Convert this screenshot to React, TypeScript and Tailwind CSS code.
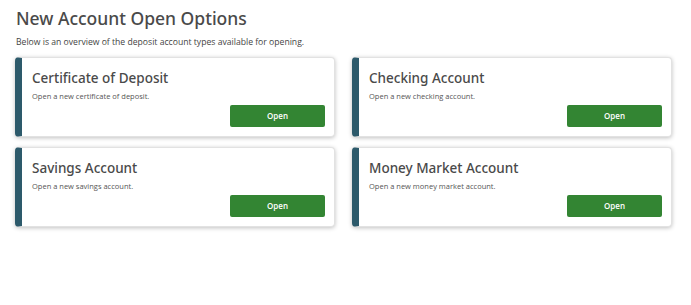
const accounts = [
  { title: "Certificate of Deposit", desc: "Open a new certificate of deposit." },
  { title: "Checking Account", desc: "Open a new checking account." },
  { title: "Savings Account", desc: "Open a new savings account." },
  { title: "Money Market Account", desc: "Open a new money market account." },
];

function AccountCard({ title, desc }: { title: string; desc: string }) {
  return (
    <div className="flex h-[80px] flex-col rounded-[4px] border border-l-[7px] border-[#e2e2e2] border-l-[#2d5a6b] bg-white pl-[10px] pr-[9px] pt-[10px] shadow-[0_1px_4px_rgba(0,0,0,0.25)]">
      <h3 className="font-['Noto_Sans',sans-serif] text-[13.5px] font-medium leading-[20px] text-[#4a4a4a]">{title}</h3>
      <p className="mt-[2px] text-[7.5px] leading-[12px] text-[#555]">{desc}</p>
      <div className="mt-[3px] flex justify-end">
        <button className="h-[22px] w-[95px] rounded-[2px] bg-[#338533] text-[8px] font-semibold text-white">
          Open
        </button>
      </div>
    </div>
  );
}

export default function App() {
  return (
    <div className="min-h-[305px] w-[691px] bg-white px-[15px] pt-[7px] font-['Open_Sans',sans-serif]">
      <h2 className="pl-[1px] font-['Noto_Sans',sans-serif] text-[17.5px] font-medium leading-[22px] text-[#4a4a4a]">New Account Open Options</h2>
      <p className="mt-[7px] pl-[1px] text-[8.65px] leading-[12px] text-[#444]">
        Below is an overview of the deposit account types available for opening.
      </p>
      <div className="mt-[9px] grid w-[657px] grid-cols-2 gap-x-[17px] gap-y-[10px]">
        {accounts.map((a) => (
          <AccountCard key={a.title} title={a.title} desc={a.desc} />
        ))}
      </div>
    </div>
  );
}
